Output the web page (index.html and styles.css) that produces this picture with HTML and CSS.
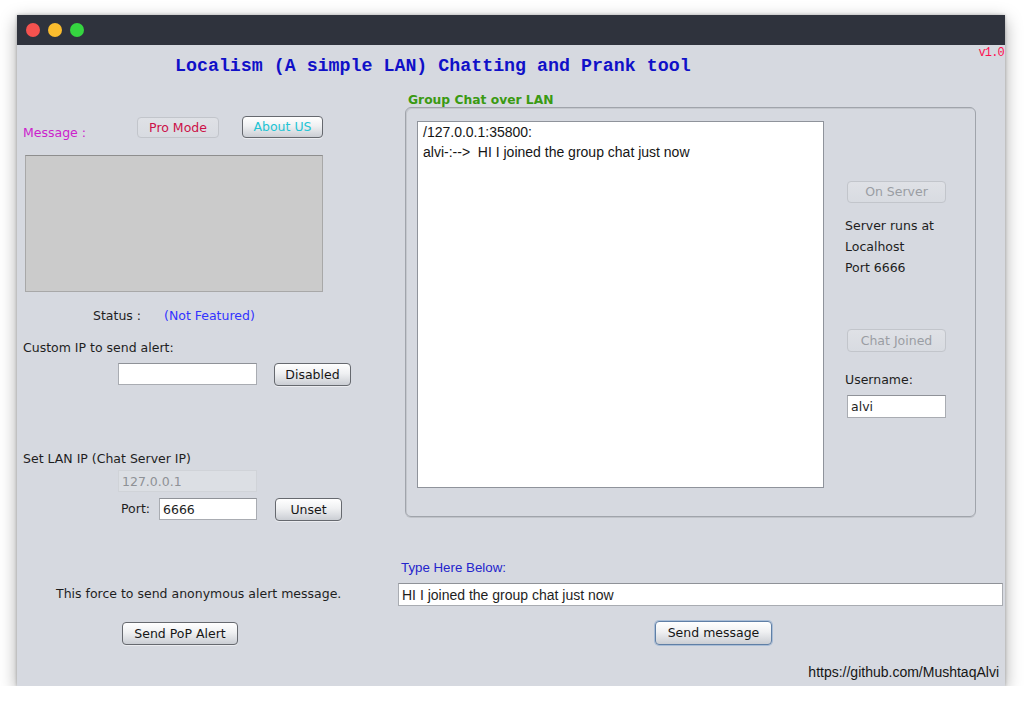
FILE: index.html
```html
<!DOCTYPE html>
<html lang="en">
<head>
<meta charset="utf-8">
<title>Localism</title>
<link rel="stylesheet" href="styles.css">
</head>
<body>
<div class="window">
  <div class="titlebar">
    <span class="light red"></span>
    <span class="light yellow"></span>
    <span class="light green"></span>
  </div>
  <div class="content">
    <header class="head">
      <h1 class="app-title">Localism (A simple LAN) Chatting and Prank tool</h1>
      <span class="version">v1.0</span>
    </header>
    <div class="main">
      <section class="left">
        <div class="msg-row">
          <span class="msg-label">Message :</span>
          <button class="btn btn-flat btn-pro">Pro Mode</button>
          <button class="btn btn-about">About US</button>
        </div>
        <div class="msg-box"></div>
        <div class="status-row">
          <span class="status-label">Status :</span>
          <span class="status-value">(Not Featured)</span>
        </div>
        <div class="label custom-label">Custom IP to send alert:</div>
        <div class="alert-row">
          <input class="field field-ip" type="text">
          <button class="btn btn-alert">Disabled</button>
        </div>
        <div class="label lan-label">Set LAN IP (Chat Server IP)</div>
        <input class="field field-ip field-disabled" type="text" value="127.0.0.1" disabled>
        <div class="port-row">
          <span class="port-label">Port:</span>
          <input class="field field-port" type="text" value="6666">
          <button class="btn btn-unset">Unset</button>
        </div>
        <div class="label force-label">This force to send anonymous alert message.</div>
        <button class="btn btn-pop">Send PoP Alert</button>
      </section>
      <section class="right">
        <div class="group-title">Group Chat over LAN</div>
        <div class="group-box">
          <div class="chat-log">
            <div>/127.0.0.1:35800:</div>
            <div>alvi-:--&gt;&nbsp; HI I joined the group chat just now</div>
          </div>
          <div class="side">
            <button class="btn btn-flat btn-off">On Server</button>
            <div class="server-info">
              <div>Server runs at</div>
              <div>Localhost</div>
              <div>Port 6666</div>
            </div>
            <button class="btn btn-flat btn-off btn-joined">Chat Joined</button>
            <div class="label user-label">Username:</div>
            <input class="field field-user" type="text" value="alvi">
          </div>
        </div>
        <div class="type-label">Type Here Below:</div>
        <input class="field field-msg" type="text" value="HI I joined the group chat just now">
        <button class="btn btn-send">Send message</button>
        <div class="footer-link">https://github.com/MushtaqAlvi</div>
      </section>
    </div>
  </div>
</div>
</body>
</html>
```

FILE: styles.css
```css
* { box-sizing: border-box; }

html, body {
  margin: 0;
  padding: 0;
  background: #ffffff;
}

body {
  padding: 15px 0 0 17px;
  font-family: "DejaVu Sans", sans-serif;
  font-size: 12.5px;
  line-height: 16px;
  color: #1e1e1e;
}

.window {
  width: 988px;
  height: 671px;
  background: #d6d9e0;
  box-shadow: 0 5px 16px rgba(0, 0, 0, 0.35), 0 0 3px rgba(0, 0, 0, 0.25);
  display: flex;
  flex-direction: column;
}

.titlebar {
  flex: none;
  height: 30px;
  background: #2f333d;
  display: flex;
  align-items: center;
  gap: 8px;
  padding-left: 9px;
}

.light {
  width: 14px;
  height: 14px;
  border-radius: 50%;
}
.red { background: #f5524f; }
.yellow { background: #fbbd2e; }
.green { background: #35d540; }

.content {
  flex: 1;
  display: flex;
  flex-direction: column;
}

.head {
  height: 45px;
  display: flex;
  align-items: flex-start;
}

.app-title {
  margin: 11px 0 0 158px;
  font: bold 18.3px/20px "Liberation Mono", monospace;
  color: #1010c8;
  white-space: pre;
}

.version {
  margin-left: auto;
  margin-right: 1px;
  font: 12px/16px "Liberation Mono", monospace;
  letter-spacing: -0.8px;
  color: #ff1050;
}

.main {
  display: flex;
}

.left {
  width: 380px;
  flex: none;
  display: flex;
  flex-direction: column;
  align-items: flex-start;
}

.right {
  flex: 1;
  display: flex;
  flex-direction: column;
  align-items: flex-start;
}

/* buttons */
.btn {
  font-family: "DejaVu Sans", sans-serif;
  font-size: 12.5px;
  line-height: 14px;
  padding: 0;
  color: #161616;
  border: 1px solid #66696f;
  border-radius: 4px;
  background: linear-gradient(to bottom, #ffffff 0%, #eff0f2 45%, #cbced4 100%);
  box-shadow: 0 1px 0 rgba(255, 255, 255, 0.5);
  text-align: center;
}

.btn-flat {
  border-color: #c2c5cb;
  background: linear-gradient(to bottom, #dfe1e6 0%, #d8dbe1 100%);
  box-shadow: none;
  color: #9a9da3;
}

/* left column */
.msg-row {
  margin-top: 26px;
  height: 25px;
  display: flex;
  align-items: flex-start;
}

.msg-label {
  flex: none;
  width: 120px;
  padding-left: 6px;
  margin-top: 9px;
  color: #cc22cc;
}

.btn-pro {
  width: 82px;
  height: 21px;
  margin-top: 1px;
  color: #cc1048;
}

.btn-about {
  width: 81px;
  height: 22px;
  margin-left: 23px;
  color: #22c4d4;
}

.msg-box {
  margin: 14px 0 0 8px;
  width: 298px;
  height: 137px;
  background: #cbcbcb;
  border: 1px solid #a8a8a8;
  border-top-color: #8e8e8e;
}

.status-row {
  margin-top: 16px;
  padding-left: 76px;
  display: flex;
}

.status-label {
  width: 71px;
}

.status-value {
  color: #3333ff;
}

.label {
  padding-left: 6px;
}

.custom-label {
  margin-top: 16px;
}

.field {
  font-family: "DejaVu Sans", sans-serif;
  font-size: 12.5px;
  color: #1e1e1e;
  background: #ffffff;
  border: 1px solid #a9acb2;
  border-top-color: #8f9298;
  border-radius: 0;
  padding: 0 3px;
  margin: 0;
  outline: none;
}

.alert-row {
  margin-top: 7px;
  padding-left: 101px;
  display: flex;
  align-items: flex-start;
  gap: 17px;
}

.field-ip {
  width: 139px;
  height: 22px;
}

.btn-alert {
  width: 77px;
  height: 23px;
}

.lan-label {
  margin-top: 65px;
}

.field-disabled {
  margin: 3px 0 0 101px;
  background: #dcdfe4;
  border-color: #d0d3d8;
  color: #8e9196;
}

.port-row {
  margin-top: 6px;
  padding-left: 104px;
  display: flex;
  align-items: flex-start;
}

.port-label {
  width: 38px;
  line-height: 22px;
}

.field-port {
  width: 98px;
  height: 22px;
}

.btn-unset {
  margin-left: 18px;
  width: 67px;
  height: 23px;
}

.force-label {
  margin-top: 65px;
  padding-left: 39px;
}

.btn-pop {
  margin: 20px 0 0 105px;
  width: 116px;
  height: 23px;
}

/* right column */
.group-title {
  margin-top: 3px;
  padding-left: 11px;
  font-weight: bold;
  font-size: 12.3px;
  line-height: 14px;
  color: #3a9a12;
}

.group-box {
  margin-left: 8px;
  width: 571px;
  height: 410px;
  border: 1px solid #a0a4ab;
  border-radius: 6px;
  box-shadow: inset 1px 1px 0 #c4c7cd, 0 1px 0 #c0c3c9;
  padding: 13px 0 0 11px;
  display: flex;
  align-items: flex-start;
}

.chat-log {
  width: 407px;
  height: 367px;
  flex: none;
  background: #ffffff;
  border: 1px solid #8f939b;
  padding: 0 5px;
  font-family: "Liberation Sans", Arial, sans-serif;
  font-size: 14px;
  line-height: 20px;
  color: #151515;
  white-space: nowrap;
}

.side {
  margin-left: 23px;
  width: 99px;
  padding-top: 60px;
  display: flex;
  flex-direction: column;
  align-items: flex-start;
}

.btn-off {
  width: 99px;
  height: 22px;
}

.server-info {
  margin: 12px 0 0 -2px;
  line-height: 21px;
}

.btn-joined {
  margin-top: 51px;
  height: 23px;
}

.user-label {
  margin: 20px 0 0 -2px;
  padding-left: 0;
}

.field-user {
  margin-top: 7px;
  width: 99px;
  height: 23px;
}

.type-label {
  margin-top: 43px;
  padding-left: 4px;
  font-family: "Liberation Sans", Arial, sans-serif;
  font-size: 13.3px;
  color: #2424cc;
}

.field-msg {
  margin: 7px 0 0 1px;
  width: 605px;
  height: 23px;
  font-family: "Liberation Sans", Arial, sans-serif;
  font-size: 14px;
}

.btn-send {
  margin: 15px 0 0 258px;
  width: 117px;
  height: 24px;
  border-color: #5f7fa6;
  box-shadow: 0 0 0 1px #a9bdd6;
}

.footer-link {
  align-self: stretch;
  margin-top: 19px;
  padding-right: 6px;
  text-align: right;
  font-family: "Liberation Sans", Arial, sans-serif;
  font-size: 14px;
  color: #151515;
}
```
